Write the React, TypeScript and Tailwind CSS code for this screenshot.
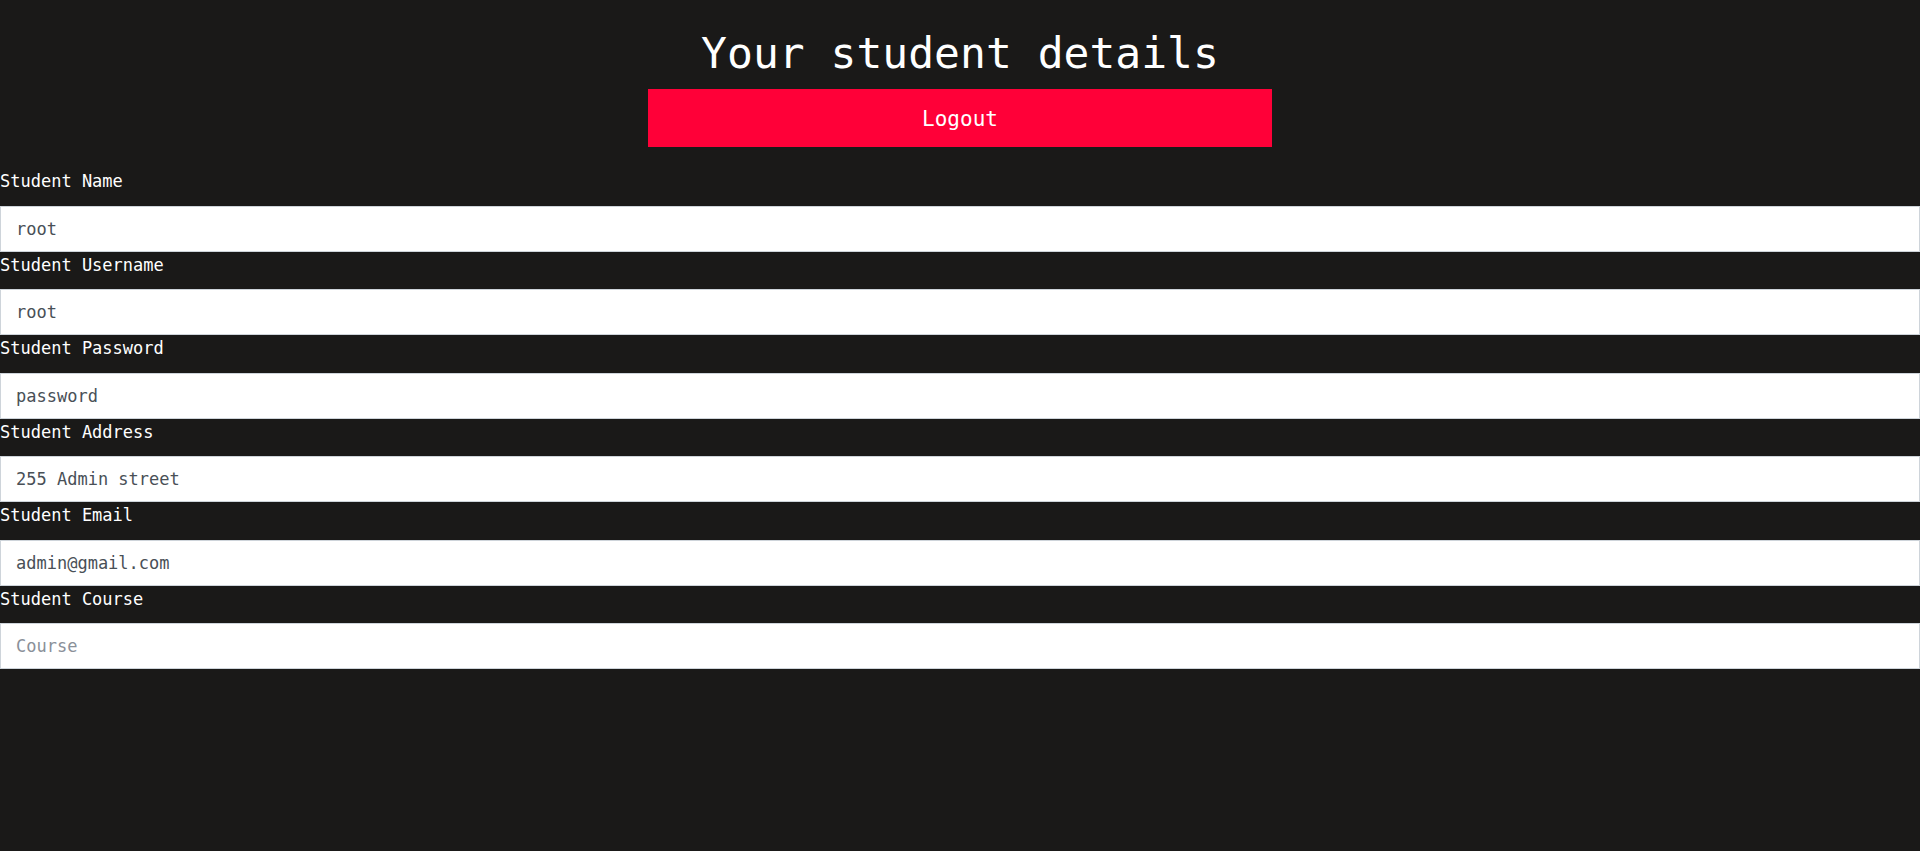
const fields = [
  { label: "Student Name", value: "root" },
  { label: "Student Username", value: "root" },
  { label: "Student Password", value: "password" },
  { label: "Student Address", value: "255 Admin street" },
  { label: "Student Email", value: "admin@gmail.com" },
  { label: "Student Course", value: "", placeholder: "Course" },
];

const App = () => {
  return (
    <div className="min-h-screen bg-[#1a1918] font-['DejaVu_Sans_Mono',monospace] text-white">
      <div className="flex flex-col items-center pt-[28px]">
        <h1 className="text-[43px] leading-[51px]">Your student details</h1>
        <button className="mt-[10px] h-[58px] w-[624px] bg-[#ff0038] pt-[4px] text-[21px] text-white">
          Logout
        </button>
      </div>
      <form className="mt-[21px] flex flex-col">
        {fields.map((f) => (
          <div key={f.label} className="flex flex-col">
            <label className="block pt-[2px] pb-[12.5px] text-[17px] leading-[23px]">
              {f.label}
            </label>
            <input
              defaultValue={f.value}
              placeholder={f.placeholder}
              className="h-[46px] w-full border border-[#ced4da] bg-white pl-[15px] text-[17px] text-[#495057] outline-none placeholder:text-[#8a9099]"
            />
          </div>
        ))}
      </form>
    </div>
  );
};

export default App;
